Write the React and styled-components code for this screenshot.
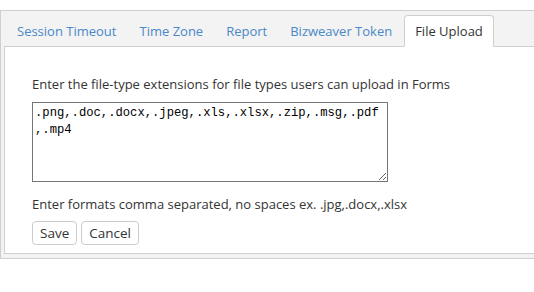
import styled, { createGlobalStyle } from "styled-components";

const GlobalStyle = createGlobalStyle`
  body {
    margin: 0;
    padding-top: 10px;
    overflow: hidden;
    background: #fff;
    font-family: "Open Sans", "Liberation Sans", sans-serif;
    font-size: 13px;
    color: #333;
  }
`;

// outer frame, runs past the right edge of the window
const Frame = styled.div`
  width: 560px;
  border: 1px solid #cfcfcf;
  background: #f3f3f3;
  padding: 4px 0 4px 3px;
`;

const TabList = styled.ul`
  display: flex;
  list-style: none;
  margin: 0;
  padding: 0 0 0 2px;
  position: relative;
  z-index: 1;
`;

const Tab = styled.li`
  height: 32px;
  box-sizing: border-box;
  display: flex;
  align-items: center;
  padding: 0 10px 1px;
  margin-right: 1px;
  margin-bottom: -1px;
  border: 1px solid transparent;
  border-radius: 4px 4px 0 0;
  color: #4a88c8;
  cursor: pointer;
  white-space: nowrap;

  ${(props) =>
    props.active &&
    `
    background: #fff;
    border-color: #cfcfcf;
    border-bottom-color: #fff;
    color: #333;
    cursor: default;
  `}
`;

const Panel = styled.div`
  background: #fff;
  border: 1px solid #cfcfcf;
  padding: 28px 0 8px 27px;
`;

const Label = styled.div`
  line-height: 18px;
  margin-bottom: 9px;
`;

const Extensions = styled.textarea`
  display: block;
  width: 356px;
  height: 80px;
  box-sizing: border-box;
  margin: 0;
  padding: 2px;
  border: 1px solid #767676;
  font-family: "Liberation Mono", monospace;
  font-size: 12.2px;
  line-height: 16.5px;
  color: #000;
  overflow-wrap: break-word;
`;

const Hint = styled.div`
  line-height: 18px;
  margin: 13px 0 8px;
`;

const Actions = styled.div`
  display: flex;
  gap: 4px;
`;

const Button = styled.button`
  height: 24px;
  padding: 0 7px;
  background: #fff;
  border: 1px solid #ccc;
  border-radius: 4px;
  font-family: inherit;
  font-size: 13.5px;
  color: #333;
  cursor: pointer;
`;

const tabs = ["Session Timeout", "Time Zone", "Report", "Bizweaver Token", "File Upload"];

export default function App() {
  return (
    <>
      <GlobalStyle />
      <Frame>
        <TabList>
          {tabs.map((t) => (
            <Tab key={t} active={t === "File Upload"}>
              {t}
            </Tab>
          ))}
        </TabList>
        <Panel>
          <Label>Enter the file-type extensions for file types users can upload in Forms</Label>
          <Extensions defaultValue=".png,.doc,.docx,.jpeg,.xls,.xlsx,.zip,.msg,.pdf,.mp4" />
          <Hint>Enter formats comma separated, no spaces ex. .jpg,.docx,.xlsx</Hint>
          <Actions>
            <Button>Save</Button>
            <Button>Cancel</Button>
          </Actions>
        </Panel>
      </Frame>
    </>
  );
}
